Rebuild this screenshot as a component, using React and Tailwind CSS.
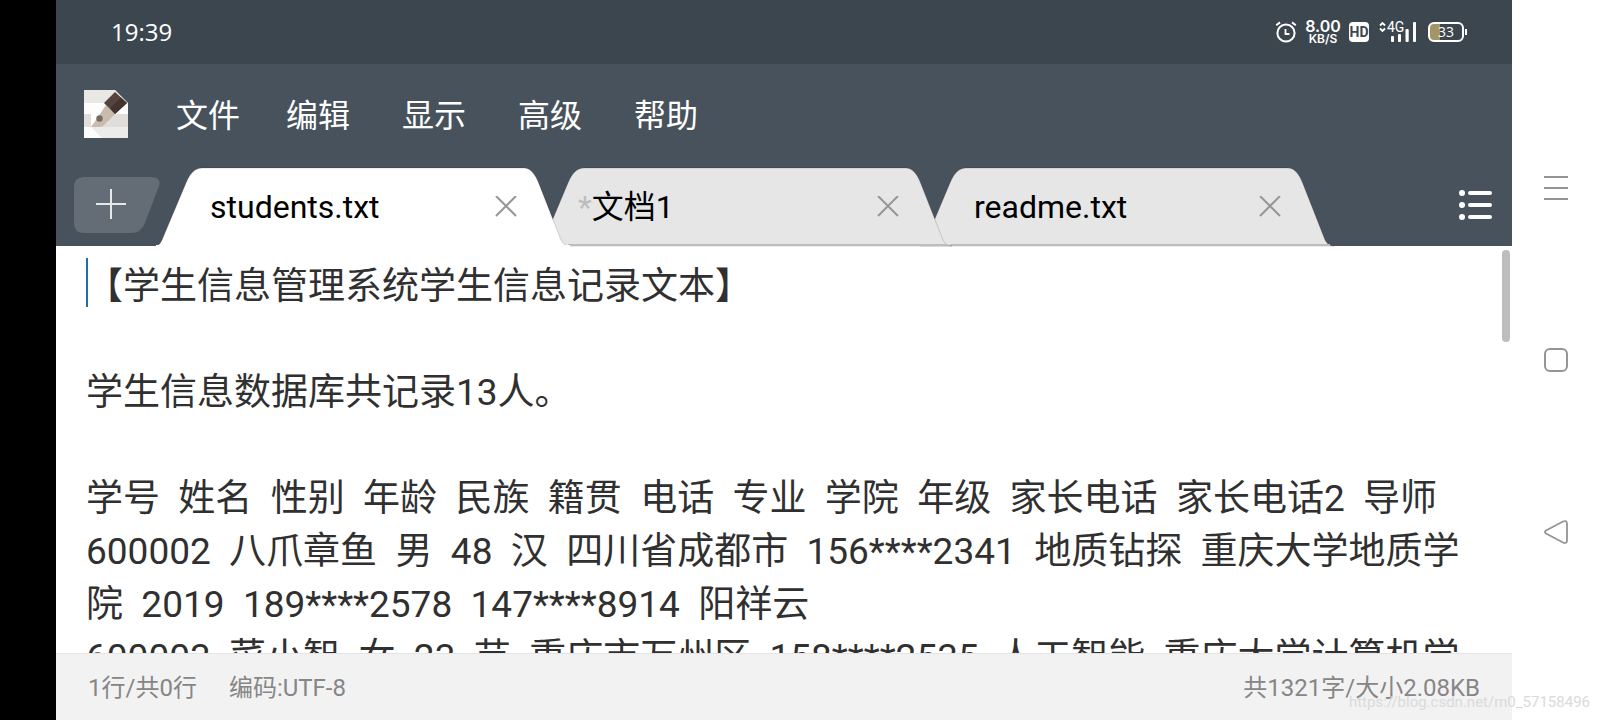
import React from "react";

const CONTENT = [
  "【学生信息管理系统学生信息记录文本】",
  "",
  "学生信息数据库共记录13人。",
  "",
  "学号  姓名  性别  年龄  民族  籍贯  电话  专业  学院  年级  家长电话  家长电话2  导师",
  "600002  八爪章鱼  男  48  汉  四川省成都市  156****2341  地质钻探  重庆大学地质学院  2019  189****2578  147****8914  阳祥云",
  "600003  菜小智  女  23  苗  重庆市万州区  158****2535  人工智能  重庆大学计算机学院",
].join("\n");

const MENUS = ["编辑", "显示", "高级", "帮助"];

function StatusBar() {
  return (
    <div className="flex h-16 shrink-0 items-center justify-between bg-[#3c464f] pl-[55px] pr-[45px] text-white">
      <span className="font-['Open_Sans',sans-serif] text-2xl">19:39</span>
      <div className="flex items-center">
        <svg width="22" height="22" viewBox="0 0 22 22" fill="none" stroke="currentColor" strokeWidth="2" aria-hidden="true">
          <circle cx="11" cy="12" r="8.6" />
          <path d="M10.5 8v5h4" strokeWidth="1.8" />
          <path d="M1.2 4.2 5 1.4M20.8 4.2 17 1.4" />
        </svg>
        <div className="ml-2 flex w-9 flex-col items-center font-['Inter',sans-serif] font-semibold">
          <span className="text-base leading-[14px]">8.00</span>
          <span className="text-xs leading-[12px]">KB/S</span>
        </div>
        <div className="ml-2 flex h-5 w-5 items-center justify-center rounded bg-white font-['Roboto',sans-serif] text-sm font-bold text-[#3c464f]">
          HD
        </div>
        <svg className="ml-[10px]" width="38" height="22" viewBox="0 0 38 22" fill="currentColor" aria-hidden="true">
          <path d="M1 4.500 3.500 2 6 4.500M1 7.500l2.500 2.500L6 7.500" fill="none" stroke="currentColor" strokeWidth="1.800" />
          <text x="8" y="11" fontFamily="Roboto, sans-serif" fontSize="14">4G</text>
          <rect x="12" y="15" width="3" height="6" rx="1" />
          <rect x="19" y="13" width="3" height="8" rx="1" />
          <rect x="26.500" y="8" width="3.200" height="13" rx="1" />
          <rect x="34" y="1" width="3" height="20" rx="1" />
        </svg>
        <svg className="ml-[10px]" width="40" height="22" viewBox="0 0 40 22" aria-hidden="true">
          <path d="M6 2.500h7v17H6a4 4 0 0 1-4-4v-9a4 4 0 0 1 4-4z" fill="#a39566" />
          <rect x="2" y="2" width="34" height="18" rx="5" fill="none" stroke="currentColor" strokeWidth="2" />
          <path d="M39 8v6" stroke="currentColor" strokeWidth="2" />
          <text x="19" y="16" textAnchor="middle" fill="currentColor" fontFamily="Open Sans, sans-serif" fontSize="14">33</text>
        </svg>
      </div>
    </div>
  );
}

function AppLogo() {
  return (
    <svg width="44" height="48" viewBox="0 0 44 48" aria-hidden="true">
      <path d="M1 0h30l13 13v34a1 1 0 0 1-1 1H1a1 1 0 0 1-1-1V1a1 1 0 0 1 1-1z" fill="#fdfdfd" />
      <path d="M1 0h30l11 13H0V1a1 1 0 0 1 1-1z" fill="#e9e8e4" />
      <path d="M0 24h44v13H0z" fill="#e0ddda" />
      <path d="M7 37h37v10a1 1 0 0 1-1 1H17.500z" fill="#ecebea" />
      <path d="M0 37h7l10.500 11H1a1 1 0 0 1-1-1z" fill="#fdfdfd" />
      <path d="M7 24v13l13-13z" fill="#fff" />
      <path d="M7 37 12 30 22 15l9 9-12 12q-2 1-5 1z" fill="#c9bcae" />
      <path d="m20 13 11-11 12 11-12 11z" fill="#54433e" />
      <path d="m26 18.500 11-11 6 5.500-12 11z" fill="#43342f" />
      <circle cx="15.500" cy="28.500" r="3.200" fill="#766a61" />
    </svg>
  );
}

function Tab({ name, modified, active, order }) {
  return (
    <div className={`relative flex h-[78px] w-[400px] shrink-0 items-center pl-[54px] pr-[39px] ${order} ${active ? "text-white" : "text-[#e6e6e6]"}`}>
      <svg className="absolute inset-0 h-full w-full overflow-visible" viewBox="0 0 400 78" aria-hidden="true">
        <path
          d="M0 78Q4 77 6 72L30 15Q36 0 46 0H368Q377 0 383 16L405 72Q408 78 414 78Z"
          fill="currentColor"
          stroke="#00000026"
          strokeWidth="1"
        />
        {active ? <path d="M0 78H414" stroke="white" strokeWidth="2" /> : <path d="M30 77H410" stroke="#bdbdbd" strokeWidth="2" />}
      </svg>
      <button type="button" className="relative flex-1 text-left text-[32px] text-black">
        {modified && <span className="-ml-[14px] text-[#bdbdbd]">*</span>}
        {name}
      </button>
      <button type="button" aria-label={`关闭 ${name}`} className="relative text-[#969696]">
        <svg width="22" height="22" viewBox="0 0 22 22" stroke="currentColor" strokeWidth="2">
          <path d="m1 0 20 20M21 0 1 20" />
        </svg>
      </button>
    </div>
  );
}

function TabBar() {
  return (
    <div className="flex h-[78px] shrink-0 items-center">
      <button type="button" aria-label="新建" className="-mr-1 ml-[18px] shrink-0 pb-1">
        <svg width="86" height="56" viewBox="0 0 86 56">
          <path d="M10 0H76Q88 0 85 9L71 46Q67 56 57 56H10Q0 56 0 46V10Q0 0 10 0Z" fill="#646c75" />
          <path d="M22 27h30M37 12v30" stroke="#e6e8ea" strokeWidth="2" />
        </svg>
      </button>
      <div className="flex flex-1">
        <Tab name="students.txt" active order="z-30" />
        <Tab name="文档1" modified order="z-20 -ml-[18px]" />
        <Tab name="readme.txt" order="z-10 -ml-[18px]" />
      </div>
      <button type="button" aria-label="文件列表" className="mr-[19px] shrink-0 pb-1 text-white">
        <svg width="35" height="32" viewBox="0 0 35 32" stroke="currentColor" strokeWidth="4" strokeLinecap="round">
          <path d="M12 4h20M12 16h20M12 28h20" />
          <g fill="currentColor" stroke="none">
            <circle cx="4" cy="4" r="3" />
            <circle cx="4" cy="16" r="3" />
            <circle cx="4" cy="28" r="3" />
          </g>
        </svg>
      </button>
    </div>
  );
}

function SystemNav() {
  return (
    <nav className="flex w-[88px] shrink-0 flex-col items-center justify-center gap-[148px] bg-white text-[#949494]">
      <button type="button" aria-label="菜单">
        <svg width="24" height="24" viewBox="0 0 24 24" stroke="currentColor" strokeWidth="2">
          <path d="M0 1h24M0 12h24M0 23h24" />
        </svg>
      </button>
      <button type="button" aria-label="主页">
        <svg width="24" height="24" viewBox="0 0 24 24" fill="none" stroke="currentColor" strokeWidth="2">
          <rect x="1" y="1" width="22" height="22" rx="5" />
        </svg>
      </button>
      <button type="button" aria-label="返回">
        <svg width="24" height="24" viewBox="0 0 24 24" fill="none" stroke="currentColor" strokeWidth="1.800" strokeLinejoin="round">
          <path d="M2 10.500 19 1.500Q23 0 23 3.500V20.500Q23 24 19 22.500L2 13.500Q0 12 2 10.500Z" />
        </svg>
      </button>
    </nav>
  );
}

export default function App() {
  return (
    <div className="relative flex h-screen overflow-hidden bg-black font-['Roboto','Noto_Sans_CJK_SC',sans-serif]">
      <div className="w-14 shrink-0 bg-black" />
      <main className="flex min-w-0 flex-1 flex-col bg-white">
        <StatusBar />
        <header className="shrink-0 bg-[#48525c]">
          <div className="flex h-[104px] items-center pl-7">
            <div className="pb-1">
              <AppLogo />
            </div>
            <div className="ml-12 flex gap-[46px] text-[32px] text-white">
              <button type="button">文件</button>
              <div className="flex gap-[52px]">
                {MENUS.map((m) => (
                  <button key={m} type="button">{m}</button>
                ))}
              </div>
            </div>
          </div>
          <TabBar />
        </header>
        <div className="relative min-h-0 flex-1 overflow-hidden">
          <textarea
            aria-label="文档内容"
            defaultValue={CONTENT}
            spellCheck={false}
            className="block h-full w-full resize-none overflow-hidden bg-white px-[30px] pt-[14px] text-[37px] leading-[53px] text-[#303030] outline-none"
          />
          <div className="absolute left-[30px] top-3 h-[49px] w-[2px] bg-[#1f6fb0]" />
          <div className="absolute right-[2px] top-1 h-[92px] w-2 rounded-full bg-[#bdbdbd]" />
        </div>
        <footer className="flex h-[67px] shrink-0 items-center justify-between border-t border-[#e4e4e4] bg-[#f2f2f2] px-8 pt-[2px] text-2xl text-[#868686]">
          <div className="flex gap-8">
            <span>1行/共0行</span>
            <span>编码:UTF-8</span>
          </div>
          <span>共1321字/大小2.08KB</span>
        </footer>
      </main>
      <SystemNav />
      <span className="absolute bottom-[7px] right-[10px] text-[15px] text-[#dadada]">https://blog.csdn.net/m0_57158496</span>
    </div>
  );
}
